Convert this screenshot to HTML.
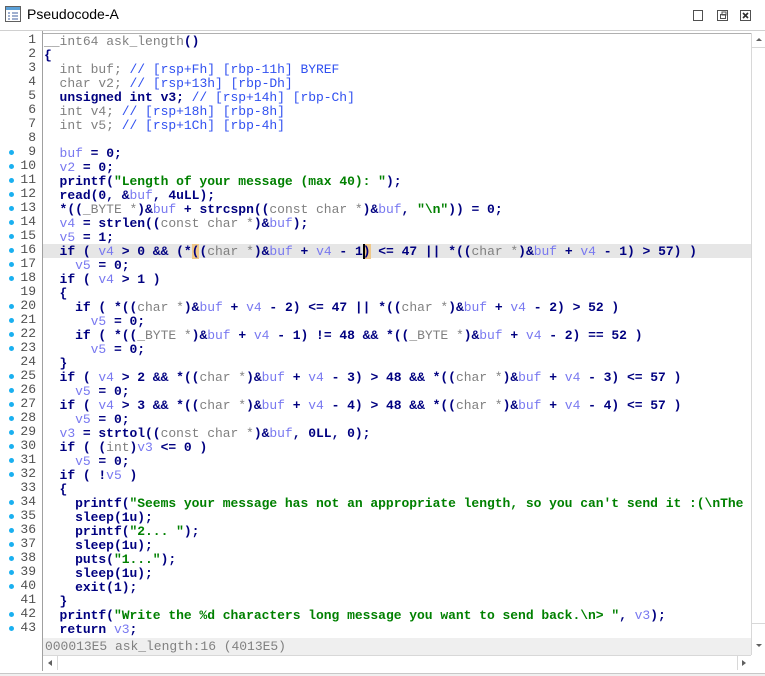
<!DOCTYPE html>
<html><head><meta charset="utf-8"><style>
body{margin:0;width:765px;height:676px;background:#f0f0f0;position:relative;overflow:hidden;font-family:"Liberation Sans",sans-serif}
#title{position:absolute;left:0;top:0;width:765px;height:30px;background:#fff;border-bottom:1px solid #d0d0d0}
#title .t{position:absolute;left:27px;top:6px;font-size:14px;color:#000}
#panel{position:absolute;left:0;top:31px;width:765px;height:642px;background:#fff;border-bottom:1px solid #c8c8c8}
#gut{position:absolute;left:0;top:0;width:42px;height:640px;background:#fff;border-right:1px solid #a0a0a0}
#code{position:absolute;left:43px;top:2px;width:708px;height:605px;background:#fff;border-top:1px solid #b0b0b0}
.ln{position:absolute;left:0;width:36px;text-align:right;font:13px "Liberation Mono",monospace;color:#505050;height:14px;line-height:14px}
.dot{position:absolute;left:9px;width:5px;height:5px;border-radius:50%;background:#1ab0f0}
.l{position:absolute;left:1px;top:0;height:14px;line-height:14px;font:bold 13px "Liberation Mono",monospace;color:#000080;white-space:pre;letter-spacing:-0.03px}
.v{color:#7878f0;font-weight:normal}.ty{color:#808080;font-weight:normal}.s{color:#008000}.c{color:#3050f0;font-weight:normal}
.hl{position:absolute;left:0;width:708px;height:14px;background:#e6e6e6}
#status{position:absolute;left:43px;top:607px;width:708px;height:17px;background:#efefef;font:13px "Liberation Mono",monospace;color:#808080;line-height:17px;padding-left:2px;box-sizing:border-box;letter-spacing:-0.03px}
#hs{position:absolute;left:43px;top:624px;width:708px;height:15px;background:#fff;border-top:1px solid #d8d8d8}
#vs{position:absolute;left:751px;top:2px;width:14px;height:622px;background:#fff;border-left:1px solid #d8d8d8}
</style></head><body>
<div id="title">
<svg style="position:absolute;left:5px;top:6px" width="16" height="16"><rect x="0.5" y="0.5" width="15" height="15" fill="#fff" stroke="#606060"/><rect x="1" y="1" width="14" height="3" fill="#5aa0d8"/><g stroke="#4060a0"><line x1="3" y1="7" x2="5" y2="7"/><line x1="7" y1="7" x2="13" y2="7"/><line x1="3" y1="10" x2="5" y2="10"/><line x1="7" y1="10" x2="13" y2="10"/><line x1="3" y1="13" x2="5" y2="13"/><line x1="7" y1="13" x2="13" y2="13"/></g></svg>
<div class="t">Pseudocode-A</div>
<svg style="position:absolute;left:692px;top:9px" width="62" height="14"><rect x="1.5" y="1.5" width="9" height="10" fill="none" stroke="#505050"/><rect x="25.5" y="1.5" width="10" height="10" fill="none" stroke="#505050"/><rect x="28.5" y="5.5" width="5" height="4" fill="none" stroke="#505050"/><rect x="30" y="3" width="4" height="3" fill="none" stroke="#505050"/><rect x="48.5" y="1.5" width="10" height="10" fill="none" stroke="#505050"/><path d="M51 4l5 5M56 4l-5 5" stroke="#303030" stroke-width="1.6"/></svg>
</div>
<div id="panel">
<div id="gut"></div>
<div id="code">
<div class="hl" style="top:210px"></div>
<div class="l" style="top:0px"><span style="color:#808080;font-weight:normal">__int64</span> <span class="ty">ask_length</span>()</div>
<div class="l" style="top:14px">{</div>
<div class="l" style="top:28px">  <span class="ty">int buf;</span> <span class="c">// [rsp+Fh] [rbp-11h] BYREF</span></div>
<div class="l" style="top:42px">  <span class="ty">char v2;</span> <span class="c">// [rsp+13h] [rbp-Dh]</span></div>
<div class="l" style="top:56px">  unsigned int v3; <span class="c">// [rsp+14h] [rbp-Ch]</span></div>
<div class="l" style="top:70px">  <span class="ty">int v4;</span> <span class="c">// [rsp+18h] [rbp-8h]</span></div>
<div class="l" style="top:84px">  <span class="ty">int v5;</span> <span class="c">// [rsp+1Ch] [rbp-4h]</span></div>
<div class="l" style="top:112px">  <span class="v">buf</span> = 0;</div>
<div class="l" style="top:126px">  <span class="v">v2</span> = 0;</div>
<div class="l" style="top:140px">  printf(<span class="s">"Length of your message (max 40): "</span>);</div>
<div class="l" style="top:154px">  read(0, &amp;<span class="v">buf</span>, 4uLL);</div>
<div class="l" style="top:168px">  *((<span class="ty">_BYTE *</span>)&amp;<span class="v">buf</span> + strcspn((<span class="ty">const char *</span>)&amp;<span class="v">buf</span>, <span class="s">"\n"</span>)) = 0;</div>
<div class="l" style="top:182px">  <span class="v">v4</span> = strlen((<span class="ty">const char *</span>)&amp;<span class="v">buf</span>);</div>
<div class="l" style="top:196px">  <span class="v">v5</span> = 1;</div>
<div class="l" style="top:210px">  if ( <span class="v">v4</span> &gt; 0 &amp;&amp; (*<span style="background:#f0c888">(</span>(<span class="ty">char *</span>)&amp;<span class="v">buf</span> + <span class="v">v4</span> - 1<span style="background:#f0c888;box-shadow:inset 2px 0 #000">)</span> &lt;= 47 || *((<span class="ty">char *</span>)&amp;<span class="v">buf</span> + <span class="v">v4</span> - 1) &gt; 57) )</div>
<div class="l" style="top:224px">    <span class="v">v5</span> = 0;</div>
<div class="l" style="top:238px">  if ( <span class="v">v4</span> &gt; 1 )</div>
<div class="l" style="top:252px">  {</div>
<div class="l" style="top:266px">    if ( *((<span class="ty">char *</span>)&amp;<span class="v">buf</span> + <span class="v">v4</span> - 2) &lt;= 47 || *((<span class="ty">char *</span>)&amp;<span class="v">buf</span> + <span class="v">v4</span> - 2) &gt; 52 )</div>
<div class="l" style="top:280px">      <span class="v">v5</span> = 0;</div>
<div class="l" style="top:294px">    if ( *((<span class="ty">_BYTE *</span>)&amp;<span class="v">buf</span> + <span class="v">v4</span> - 1) != 48 &amp;&amp; *((<span class="ty">_BYTE *</span>)&amp;<span class="v">buf</span> + <span class="v">v4</span> - 2) == 52 )</div>
<div class="l" style="top:308px">      <span class="v">v5</span> = 0;</div>
<div class="l" style="top:322px">  }</div>
<div class="l" style="top:336px">  if ( <span class="v">v4</span> &gt; 2 &amp;&amp; *((<span class="ty">char *</span>)&amp;<span class="v">buf</span> + <span class="v">v4</span> - 3) &gt; 48 &amp;&amp; *((<span class="ty">char *</span>)&amp;<span class="v">buf</span> + <span class="v">v4</span> - 3) &lt;= 57 )</div>
<div class="l" style="top:350px">    <span class="v">v5</span> = 0;</div>
<div class="l" style="top:364px">  if ( <span class="v">v4</span> &gt; 3 &amp;&amp; *((<span class="ty">char *</span>)&amp;<span class="v">buf</span> + <span class="v">v4</span> - 4) &gt; 48 &amp;&amp; *((<span class="ty">char *</span>)&amp;<span class="v">buf</span> + <span class="v">v4</span> - 4) &lt;= 57 )</div>
<div class="l" style="top:378px">    <span class="v">v5</span> = 0;</div>
<div class="l" style="top:392px">  <span class="v">v3</span> = strtol((<span class="ty">const char *</span>)&amp;<span class="v">buf</span>, 0LL, 0);</div>
<div class="l" style="top:406px">  if ( (<span class="ty">int</span>)<span class="v">v3</span> &lt;= 0 )</div>
<div class="l" style="top:420px">    <span class="v">v5</span> = 0;</div>
<div class="l" style="top:434px">  if ( !<span class="v">v5</span> )</div>
<div class="l" style="top:448px">  {</div>
<div class="l" style="top:462px">    printf(<span class="s">"Seems your message has not an appropriate length, so you can't send it :(\nThe</span></div>
<div class="l" style="top:476px">    sleep(1u);</div>
<div class="l" style="top:490px">    printf(<span class="s">"2... "</span>);</div>
<div class="l" style="top:504px">    sleep(1u);</div>
<div class="l" style="top:518px">    puts(<span class="s">"1..."</span>);</div>
<div class="l" style="top:532px">    sleep(1u);</div>
<div class="l" style="top:546px">    exit(1);</div>
<div class="l" style="top:560px">  }</div>
<div class="l" style="top:574px">  printf(<span class="s">"Write the %d characters long message you want to send back.\n&gt; "</span>, <span class="v">v3</span>);</div>
<div class="l" style="top:588px">  return <span class="v">v3</span>;</div>
</div>
<div id="status">000013E5 ask_length:16 (4013E5)</div>
<div id="hs"><div style="position:absolute;left:0;top:0;width:14px;height:14px;border-right:1px solid #d8d8d8"></div><div style="position:absolute;left:5px;top:4px;border:3px solid transparent;border-right:4px solid #606060;border-left:0"></div><div style="position:absolute;left:694px;top:0;width:14px;height:14px;border-left:1px solid #d8d8d8"></div><div style="position:absolute;left:699px;top:4px;border:3px solid transparent;border-left:4px solid #606060;border-right:0"></div></div>
<div id="vs"><div style="position:absolute;left:4px;top:5px;border:3px solid transparent;border-bottom:3px solid #606060;border-top:0"></div><div style="position:absolute;left:0;top:14px;width:14px;border-top:1px solid #d8d8d8"></div><div style="position:absolute;left:0;top:590px;width:14px;border-top:1px solid #d8d8d8"></div><div style="position:absolute;left:4px;top:611px;border:3px solid transparent;border-top:3px solid #606060;border-bottom:0"></div></div>
</div>
<div style="position:absolute;left:0;top:33px">
<div class="ln" style="top:0">1</div><div class="ln" style="top:14px">2</div><div class="ln" style="top:28px">3</div><div class="ln" style="top:42px">4</div><div class="ln" style="top:56px">5</div><div class="ln" style="top:70px">6</div><div class="ln" style="top:84px">7</div><div class="ln" style="top:98px">8</div><div class="ln" style="top:112px">9</div><div class="ln" style="top:126px">10</div><div class="ln" style="top:140px">11</div><div class="ln" style="top:154px">12</div><div class="ln" style="top:168px">13</div><div class="ln" style="top:182px">14</div><div class="ln" style="top:196px">15</div><div class="ln" style="top:210px">16</div><div class="ln" style="top:224px">17</div><div class="ln" style="top:238px">18</div><div class="ln" style="top:252px">19</div><div class="ln" style="top:266px">20</div><div class="ln" style="top:280px">21</div><div class="ln" style="top:294px">22</div><div class="ln" style="top:308px">23</div><div class="ln" style="top:322px">24</div><div class="ln" style="top:336px">25</div><div class="ln" style="top:350px">26</div><div class="ln" style="top:364px">27</div><div class="ln" style="top:378px">28</div><div class="ln" style="top:392px">29</div><div class="ln" style="top:406px">30</div><div class="ln" style="top:420px">31</div><div class="ln" style="top:434px">32</div><div class="ln" style="top:448px">33</div><div class="ln" style="top:462px">34</div><div class="ln" style="top:476px">35</div><div class="ln" style="top:490px">36</div><div class="ln" style="top:504px">37</div><div class="ln" style="top:518px">38</div><div class="ln" style="top:532px">39</div><div class="ln" style="top:546px">40</div><div class="ln" style="top:560px">41</div><div class="ln" style="top:574px">42</div><div class="ln" style="top:588px">43</div>
<div class="dot" style="top:117px"></div><div class="dot" style="top:131px"></div><div class="dot" style="top:145px"></div><div class="dot" style="top:159px"></div><div class="dot" style="top:173px"></div><div class="dot" style="top:187px"></div><div class="dot" style="top:201px"></div><div class="dot" style="top:215px"></div><div class="dot" style="top:229px"></div><div class="dot" style="top:243px"></div><div class="dot" style="top:271px"></div><div class="dot" style="top:285px"></div><div class="dot" style="top:299px"></div><div class="dot" style="top:313px"></div><div class="dot" style="top:341px"></div><div class="dot" style="top:355px"></div><div class="dot" style="top:369px"></div><div class="dot" style="top:383px"></div><div class="dot" style="top:397px"></div><div class="dot" style="top:411px"></div><div class="dot" style="top:425px"></div><div class="dot" style="top:439px"></div><div class="dot" style="top:467px"></div><div class="dot" style="top:481px"></div><div class="dot" style="top:495px"></div><div class="dot" style="top:509px"></div><div class="dot" style="top:523px"></div><div class="dot" style="top:537px"></div><div class="dot" style="top:551px"></div><div class="dot" style="top:579px"></div><div class="dot" style="top:593px"></div>
</div>
</body></html>
